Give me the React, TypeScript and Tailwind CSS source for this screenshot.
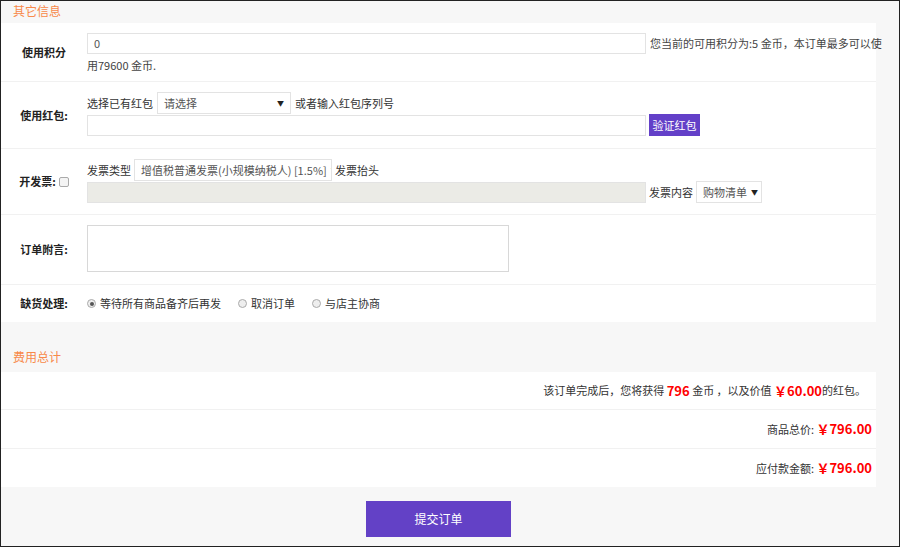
import React from "react";

const Sel = ({ w, text }: { w: string; text: string }) => (
  <div className={`${w} shrink-0 h-[22px] bg-white border border-[#e3e3e3] flex items-center justify-between px-[6px] text-[#555] whitespace-nowrap overflow-hidden`}>
    <span>{text}</span>
    <span className="text-[7px] text-[#222] ml-[4px]">▼</span>
  </div>
);

const Label = ({ children }: { children: React.ReactNode }) => (
  <div className="w-[86px] shrink-0 flex items-center justify-center font-bold text-[#222]">{children}</div>
);

export default function App() {
  return (
    <div
      className="w-[900px] h-[547px] border border-[#222] bg-[#f7f7f7] text-[11px] text-[#333] overflow-hidden whitespace-nowrap"
      style={{ fontFamily: '"Noto Sans CJK SC", "Noto Sans", sans-serif' }}
    >
      <div className="h-[22px] pl-[12px] text-[12px] text-[#f8894a] leading-[20px]">其它信息</div>
      <div className="w-[875px] bg-white">
        <div className="h-[59px] flex border-b border-[#f1f1f1]">
          <Label>使用积分</Label>
          <div className="flex-1 pt-[10px] leading-[20px]">
            <div className="flex">
              <div className="w-[559px] h-[21px] border border-[#e3e3e3] px-[6px] leading-[19px] text-[#555]">0</div>
              <span className="ml-[4px] text-[#444]">您当前的可用积分为:5 金币，本订单最多可以使</span>
            </div>
            <div className="mt-[1px] text-[#444]">用79600 金币.</div>
          </div>
        </div>
        <div className="h-[67px] flex border-b border-[#f1f1f1]">
          <Label>使用红包:</Label>
          <div className="flex-1 pt-[10px]">
            <div className="flex items-center gap-[4px]">
              <span>选择已有红包</span>
              <Sel w="w-[134px]" text="请选择" />
              <span>或者输入红包序列号</span>
            </div>
            <div className="flex items-center">
              <div className="w-[559px] h-[21px] border border-[#e3e3e3]" />
              <div className="ml-[3px] w-[51px] h-[22px] bg-[#6340c8] text-white flex items-center justify-center">验证红包</div>
            </div>
          </div>
        </div>
        <div className="h-[66px] flex border-b border-[#f1f1f1]">
          <div className="w-[86px] shrink-0 flex items-center justify-center font-bold text-[#222] gap-[3px]">
            开发票:<span className="w-[10px] h-[10px] border border-[#aaa] rounded-[2px] bg-[#f4f4f4]" />
          </div>
          <div className="flex-1 pt-[10px]">
            <div className="flex items-center gap-[3px]">
              <span>发票类型</span>
              <Sel w="w-[198px]" text="增值税普通发票(小规模纳税人) [1.5%]" />
              <span>发票抬头</span>
            </div>
            <div className="flex items-center">
              <div className="w-[559px] h-[21px] bg-[#ebebe6] border border-[#e3e3e3]" />
              <span className="ml-[3px] mr-[3px]">发票内容</span>
              <Sel w="w-[66px]" text="购物清单" />
            </div>
          </div>
        </div>
        <div className="h-[70px] flex border-b border-[#f1f1f1]">
          <Label>订单附言:</Label>
          <div className="flex-1 pt-[10px]">
            <div className="w-[422px] h-[47px] border border-[#d8d8d8]" />
          </div>
        </div>
        <div className="h-[37px] flex items-center">
          <Label>缺货处理:</Label>
          <div className="flex items-center text-[#333]">
            {["等待所有商品备齐后再发", "取消订单", "与店主协商"].map((t, i) => (
              <div key={t} className="flex items-center mr-[17px]">
                <span className="w-[9px] h-[9px] rounded-full border border-[#aaa] bg-[#eee] flex items-center justify-center mr-[4px]">
                  {i === 0 && <span className="w-[4px] h-[4px] rounded-full bg-[#555]" />}
                </span>
                {t}
              </div>
            ))}
          </div>
        </div>
      </div>
      <div className="h-[50px] flex items-end pl-[12px] pb-[6px] text-[12px] text-[#f8894a]">费用总计</div>
      <div className="w-[875px] bg-white text-[#333]">
        <div className="h-[38px] flex items-center justify-end pr-[10px] border-b border-[#f1f1f1]">
          该订单完成后，您将获得&nbsp;<b className="text-[#f00] text-[13px]">796</b>&nbsp;金币 ，以及价值&nbsp;<b className="text-[#f00] text-[13px]">￥60.00</b>的红包。
        </div>
        <div className="h-[39px] flex items-center justify-end pr-[4px] border-b border-[#f1f1f1]">
          商品总价:&nbsp;<b className="text-[#f00] text-[13px]">￥796.00</b>
        </div>
        <div className="h-[38px] flex items-center justify-end pr-[4px]">
          应付款金额:&nbsp;<b className="text-[#f00] text-[13px]">￥796.00</b>
        </div>
      </div>
      <div className="w-[875px] flex justify-center pt-[14px]">
        <div className="w-[145px] h-[36px] bg-[#6341c6] text-white text-[12px] flex items-center justify-center">提交订单</div>
      </div>
    </div>
  );
}
